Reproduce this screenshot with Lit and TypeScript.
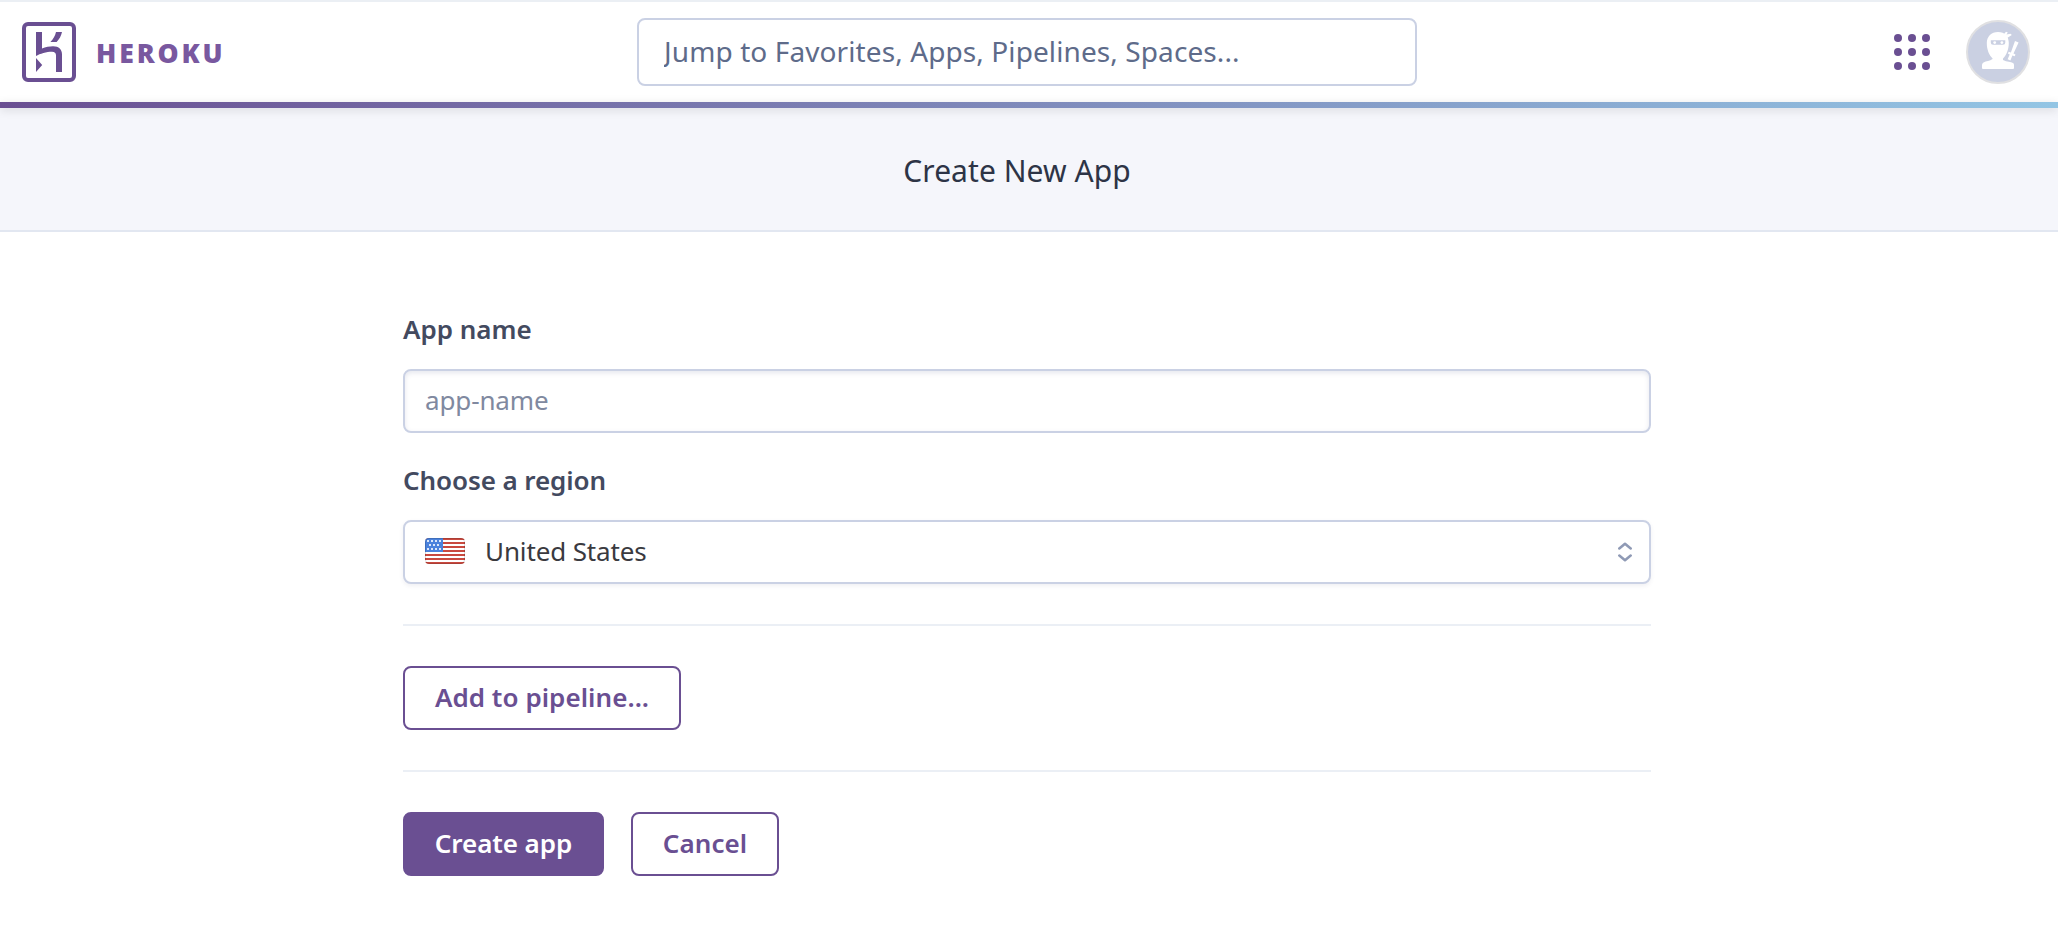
import { LitElement, html, svg, css } from "lit";
import { customElement } from "lit/decorators.js";

@customElement("heroku-header")
class HerokuHeader extends LitElement {
  static styles = css`
    :host { display: block; position: relative; font-family: "Noto Sans", sans-serif; }
    .bar {
      box-sizing: border-box; height: 102px; border-top: 2px solid #ebeff4; background: #fff;
      display: grid; grid-template-columns: 637px 780px 1fr; align-items: center;
    }
    .brand { display: flex; align-items: center; padding-left: 22px; gap: 20px; }
    .brand svg, .actions svg { display: block; }
    .word { font-size: 26.5px; line-height: 36px; font-weight: 900; letter-spacing: 2.9px; color: #79589f; padding-top: 2px; }
    .search {
      box-sizing: border-box; width: 780px; height: 68px; border: 2px solid #cad1e4; border-radius: 8px;
      padding: 0 24px 2px 25px; outline: 0; background: #fff;
      font: 400 28px "Noto Sans", sans-serif; letter-spacing: 0.1px; color: #596981;
    }
    .search::placeholder { color: #5e6b8a; opacity: 1; }
    .actions { display: flex; align-items: center; justify-content: flex-end; gap: 36px; padding-right: 28px; }
    .stripe { height: 6px; background: linear-gradient(90deg, #6a4f92, #93c5e4); box-shadow: 0 2px 10px rgba(0, 0, 0, 0.13); }
  `;

  render() {
    const steps = [4, 18, 32];
    return html`
      <header class="bar">
        <div class="brand">
          <svg width="54" height="60" viewBox="0 0 54 60" fill="#6a4f92">
            <rect x="2" y="2" width="50" height="56" rx="4" fill="none" stroke="#6a4f92" stroke-width="4" />
            <path d="M14 10h6v16.400c3.600-1.300 7.500-2.100 11-2.100 6 0 9 3.400 9 8.400V50h-6V33.300c0-2.300-1.300-3.500-4-3.500-5.500 0-12 1.900-16 4.300z" />
            <path d="M14 36l6.200 7-6.200 7zM34 10h6c-.8 3.800-2.700 7.300-5.400 10h-6.200c2.900-2.900 4.800-6.200 5.600-10z" />
          </svg>
          <span class="word">HEROKU</span>
        </div>
        <input class="search" placeholder="Jump to Favorites, Apps, Pipelines, Spaces..." />
        <div class="actions">
          <svg width="36" height="36" viewBox="0 0 36 36" fill="#6a4f92">
            ${steps.map((y) => steps.map((x) => svg`<circle cx=${x} cy=${y} r="4" />`))}
          </svg>
          <svg width="64" height="64" viewBox="0 0 64 64">
            <circle cx="32" cy="32" r="31" fill="#cad0e2" stroke="#e0e0e2" stroke-width="2" />
            <g fill="#fff">
              <path d="M32 12c7 0 10.800 4.500 10.800 11 0 6.500-2.500 12.500-5.800 15.500v1.500c4 2 8 1.800 10 3 1 .7 1 1.600 1 3v2q0 1-1 1H17q-1 0-1-1v-2c0-1.500.2-2.600 1.500-3.500 2.500-1.600 6.500-1.500 9-3.500v-.8c-3.500-3-5.700-8.700-5.700-15.200 0-6.500 4.500-11 11.200-11z" />
              <path d="M38 14l2-2.200 1.800.6-1.300 2.200 4-.8 1.300 1.300-5.500 3.400z" />
              <path d="M49 21l3.600 1.500-5.100 11 2 1-.8 1.800-2.300-.8-2 5-2.800-1.200 2.100-4.800-1.800-1 .8-1.800 2.200.8z" />
            </g>
            <path d="M24.800 20.200h14.500v2.300q0 2.300-2.300 2.300h-9.900q-2.300 0-2.300-2.300z" fill="#cad0e2" />
            <circle cx="28.700" cy="22.600" r="1.400" fill="#fff" /><circle cx="35.900" cy="22.600" r="1.400" fill="#fff" />
          </svg>
        </div>
      </header>
      <div class="stripe"></div>
    `;
  }
}

@customElement("us-flag")
class UsFlag extends LitElement {
  static styles = css`:host, svg { display: block; }`;
  render() {
    const stars: Array<[number, number]> = [];
    [2, 6, 10].forEach((y, row) => {
      const xs = row === 1 ? [4, 8, 12] : [2, 6, 10, 14];
      xs.forEach((x) => stars.push([x, y]));
    });
    return html`<svg width="40" height="26" viewBox="0 0 40 26">
      <defs><clipPath id="c"><rect width="40" height="26" rx="4" /></clipPath></defs>
      <g clip-path="url(#c)">
        <rect width="40" height="26" fill="#fff" />
        ${[0, 4, 8, 12, 16, 20, 24].map((y) => svg`<rect y=${y} width="40" height="2" fill="#c9493f" />`)}
        <rect width="18" height="14" fill="#4b82dc" />
        ${stars.map(([x, y]) => svg`<rect x=${x} y=${y} width="2" height="2" fill="#dbe7fa" />`)}
      </g>
      <rect x=".5" y=".5" width="39" height="25" rx="3.500" fill="none" stroke="#000" stroke-opacity=".15" />
    </svg>`;
  }
}

@customElement("app-root")
class AppRoot extends LitElement {
  static styles = css`
    :host { display: block; min-height: 936px; background: #fff; font-family: "Noto Sans", sans-serif; }
    .title {
      box-sizing: border-box; height: 124px; background: #f5f6fb; border-bottom: 2px solid #e2e7f1;
      display: flex; align-items: center; justify-content: center; padding: 2px 24px 0 0;
      font-size: 30px; letter-spacing: 0.06px; color: #2d3446;
    }
    .form { width: 1248px; margin-left: 403px; padding-top: 77px; }
    .label { display: block; font-size: 26px; font-weight: 600; line-height: 40px; color: #434a5f; margin-bottom: 20px; }
    .wide { letter-spacing: -0.08px; }
    .field {
      display: flex; align-items: center; box-sizing: border-box; width: 100%; height: 64px;
      border: 2px solid #cad1e4; border-radius: 8px; padding: 0 17px 2px 20px; background: #fff; outline: 0;
      font: 400 26px "Noto Sans", sans-serif; letter-spacing: -0.13px;
    }
    .name { margin-bottom: 27px; box-shadow: inset 0 2px 5px rgba(60, 70, 120, 0.13); }
    .name::placeholder { color: #8089a0; opacity: 1; }
    .region { color: #3a3a3f; box-shadow: 0 2px 4px rgba(60, 70, 100, 0.08); }
    .chevrons { padding-top: 2px; }
    .country { flex: 1; margin-left: 20px; }
    .rule { height: 2px; background: #ebeff5; margin: 40px 0; }
    .row { display: flex; gap: 27px; }
    .btn {
      box-sizing: border-box; height: 64px; border: 2px solid #6a4f92; border-radius: 8px; background: #fff;
      color: #6a4f92; font: 600 26px "Noto Sans", sans-serif; padding: 0 0 2px; text-align: center;
    }
    .pipeline { width: 278px; letter-spacing: 0.05px; }
    .create { width: 201px; background: #6a4f92; color: #fff; letter-spacing: -0.08px; }
    .cancel { width: 148px; letter-spacing: 0.07px; }
  `;

  render() {
    return html`
      <heroku-header></heroku-header>
      <div class="title">Create New App</div>
      <main class="form">
        <label class="label">App name</label>
        <input class="field name" placeholder="app-name" />
        <label class="label wide">Choose a region</label>
        <div class="field region">
          <us-flag></us-flag>
          <span class="country">United States</span>
          <svg class="chevrons" width="14" height="20" viewBox="0 0 14 20" fill="none" stroke="#8f9ab5" stroke-width="2.500" stroke-linecap="round" stroke-linejoin="round">
            <path d="M1.300 6.500L7 1.700l5.700 4.800M1.300 13.500L7 18.300l5.700-4.800" />
          </svg>
        </div>
        <div class="rule"></div>
        <div class="row"><button class="btn pipeline">Add to pipeline...</button></div>
        <div class="rule"></div>
        <div class="row">
          <button class="btn create">Create app</button>
          <button class="btn cancel">Cancel</button>
        </div>
      </main>
    `;
  }
}
